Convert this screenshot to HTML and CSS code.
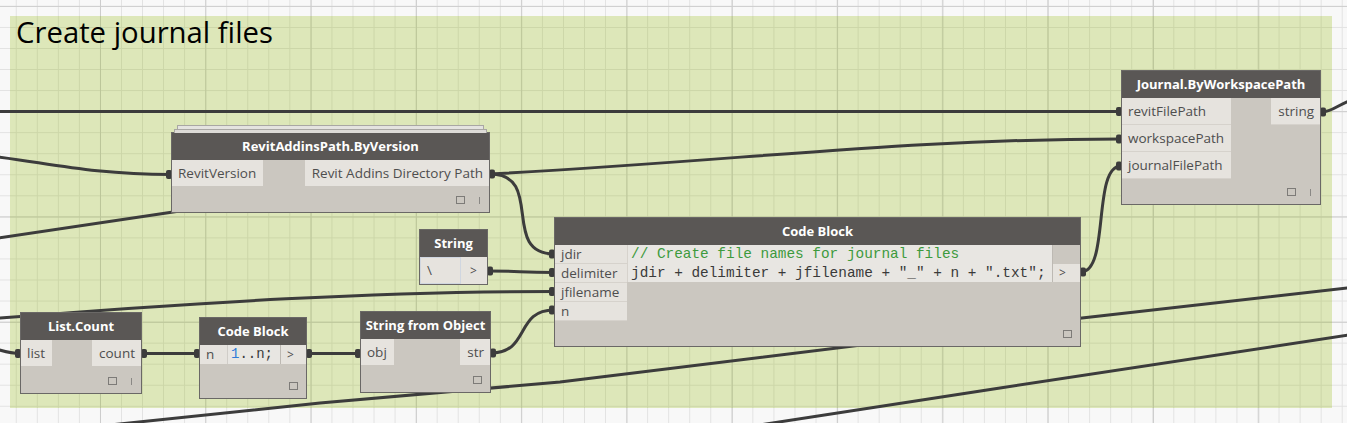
FILE: index.html
```html
<!DOCTYPE html>
<html>
<head>
<meta charset="utf-8">
<link rel="stylesheet" href="styles.css">
</head>
<body>
<div class="canvas">
  <div class="group"><div class="group-title">Create journal files</div></div>

  <svg class="wires" width="1347" height="423" viewBox="0 0 1347 423">
    <g class="wire">
      <path d="M -5 111.5 L 1121 111.5"/>
      <path d="M -80 152 C 20 152, 60 174.5, 171 174.5"/>
      <path d="M -5 238.5 L 200 208"/>
      <path d="M -5 318.5 C 200 302, 380 291.5, 554 291.5"/>
      <path d="M -40 340 C -10 344, 0 353.5, 20 353.5"/>
      <path d="M 142 353.5 L 199 353.5"/>
      <path d="M 307 353.5 L 360 353.5"/>
      <path d="M 491 353 C 530 353, 515 310, 554 310"/>
      <path d="M 488 271 C 520 271, 520 272.5, 554 272.5"/>
      <path d="M 490 174 C 545 174, 500 254, 554 254"/>
      <path d="M 490 174 C 750 160, 900 139, 1121 139"/>
      <path d="M 1081 272 C 1110 272, 1092 166, 1121 166"/>
      <path d="M 1321 112 C 1333 112, 1338 104, 1352 100"/>
      <path d="M 110 425 L 320 403 L 560 382 L 1082 318 L 1352 287.5"/>
      <path d="M 740 428 L 1000 388 L 1352 334.5"/>
    </g>
    <g class="pins">
      <rect x="166" y="170" width="6" height="9" rx="2"/>
      <rect x="1116" y="107" width="6" height="9" rx="2"/>
      <rect x="1116" y="134.5" width="6" height="9" rx="2"/>
      <rect x="1116" y="161.5" width="6" height="9" rx="2"/>
      <rect x="549" y="249.5" width="6" height="9" rx="2"/>
      <rect x="549" y="268" width="6" height="9" rx="2"/>
      <rect x="549" y="287" width="6" height="9" rx="2"/>
      <rect x="549" y="305.5" width="6" height="9" rx="2"/>
      <rect x="15" y="349" width="6" height="9" rx="2"/>
      <rect x="194" y="349" width="6" height="9" rx="2"/>
      <rect x="355" y="349" width="6" height="9" rx="2"/>
      <rect x="489" y="169.5" width="6" height="9" rx="2"/>
      <rect x="1320" y="107.5" width="6" height="9" rx="2"/>
      <rect x="487" y="266.5" width="6" height="9" rx="2"/>
      <rect x="1080" y="267.5" width="6" height="9" rx="2"/>
      <rect x="141" y="349" width="6" height="9" rx="2"/>
      <rect x="306" y="349" width="6" height="9" rx="2"/>
      <rect x="490" y="348.5" width="6" height="9" rx="2"/>
    </g>
  </svg>

  <div class="node n-revit">
    <div class="stack"></div>
    <div class="head">RevitAddinsPath.ByVersion</div>
    <div class="ports">
      <div class="col"><div class="port in">RevitVersion</div></div>
      <div class="col"><div class="port out">Revit Addins Directory Path</div></div>
    </div>
    <div class="foot"><span class="sq"></span><span class="lace"></span></div>
  </div>

  <div class="node n-journal">
    <div class="head">Journal.ByWorkspacePath</div>
    <div class="ports">
      <div class="col">
        <div class="port in tall">revitFilePath</div>
        <div class="port in tall">workspacePath</div>
        <div class="port in tall">journalFilePath</div>
      </div>
      <div class="col"><div class="port out tall">string</div></div>
    </div>
    <div class="foot"><span class="sq"></span><span class="lace"></span></div>
  </div>

  <div class="node n-string">
    <div class="head">String</div>
    <div class="srow">
      <div class="sval">\</div>
      <div class="sout">&gt;</div>
    </div>
  </div>

  <div class="node n-code">
    <div class="head">Code Block</div>
    <div class="cb">
      <div class="cb-in">
        <div class="cport">jdir</div>
        <div class="cport">delimiter</div>
        <div class="cport">jfilename</div>
        <div class="cport">n</div>
      </div>
      <div class="cb-code">
        <div class="cline comment">// Create file names for journal files</div>
        <div class="cline">jdir + delimiter + jfilename + "_" + n + ".txt";</div>
      </div>
      <div class="cb-out">
        <div class="cout blank"></div>
        <div class="cout">&gt;</div>
      </div>
    </div>
    <div class="foot"><span class="sq"></span></div>
  </div>

  <div class="node n-count">
    <div class="head">List.Count</div>
    <div class="ports">
      <div class="col"><div class="port in">list</div></div>
      <div class="col"><div class="port out">count</div></div>
    </div>
    <div class="foot"><span class="sq"></span><span class="lace"></span></div>
  </div>

  <div class="node n-cb2">
    <div class="head">Code Block</div>
    <div class="mini">
      <div class="mport">n</div>
      <div class="mcode"><span class="num">1</span>..n;</div>
      <div class="mout">&gt;</div>
    </div>
    <div class="foot"><span class="sq"></span></div>
  </div>

  <div class="node n-sfo">
    <div class="head">String from Object</div>
    <div class="ports">
      <div class="col"><div class="port in">obj</div></div>
      <div class="col"><div class="port out">str</div></div>
    </div>
    <div class="foot"><span class="sq"></span></div>
  </div>
</div>
</body>
</html>
```

FILE: styles.css
```css
body {
  margin: 0;
}

.canvas {
  position: relative;
  width: 1347px;
  height: 423px;
  overflow: hidden;
  background-color: #f8f8f8;
  background-image:
    linear-gradient(to right, #cdcdcd 1px, transparent 1px),
    linear-gradient(to bottom, #cdcdcd 1px, transparent 1px),
    linear-gradient(to right, #e2e2e2 1px, transparent 1px),
    linear-gradient(to bottom, #e2e2e2 1px, transparent 1px);
  background-size: 105.3px 105.3px, 105.3px 105.3px, 21.06px 21.06px, 21.06px 21.06px;
  background-position: 100px 0, 0 5.9px, 15.76px 0, 0 5.9px;
  font-family: "Open Sans", "Noto Sans", sans-serif;
}

.group {
  position: absolute;
  left: 10px;
  top: 16px;
  width: 1322px;
  height: 392px;
  background-color: #dde7b9;
  background-image:
    linear-gradient(to right, #bcc69a 1px, transparent 1px),
    linear-gradient(to bottom, #bcc69a 1px, transparent 1px),
    linear-gradient(to right, #ccd6a8 1px, transparent 1px),
    linear-gradient(to bottom, #ccd6a8 1px, transparent 1px);
  background-size: 105.3px 105.3px, 105.3px 105.3px, 21.06px 21.06px, 21.06px 21.06px;
  background-position: 90px 0, 0 95.2px, 5.76px 0, 0 10.96px;
}

.group-title {
  padding: 2px 0 0 6px;
  font-size: 29.3px;
  line-height: 29px;
  color: #000;
}

.wires {
  position: absolute;
  left: 0;
  top: 0;
}

.wire path {
  fill: none;
  stroke: #3c3c3c;
  stroke-width: 3;
}

.pins rect {
  fill: #3c3c3c;
}

/* nodes */
.node {
  position: absolute;
  box-sizing: border-box;
  display: flex;
  flex-direction: column;
  background: #cbc7c0;
  border: 1px solid #6a6866;
  color: #4e4e4e;
  font-size: 13.5px;
}

.head {
  flex: none;
  height: 27px;
  background: #5a5755;
  color: #fff;
  font-weight: 700;
  font-size: 13px;
  line-height: 27px;
  text-align: center;
  white-space: nowrap;
}

.ports {
  display: flex;
  justify-content: space-between;
  align-items: flex-start;
}

.col {
  display: flex;
  flex-direction: column;
}

.port {
  height: 26px;
  line-height: 26px;
  background: #e6e3de;
  white-space: nowrap;
}

.port.tall {
  height: 26px;
  line-height: 26px;
  border-bottom: 1px solid #d6d2cc;
}

.port.in {
  padding: 0 7px 0 6px;
}

.port.out {
  padding: 0 6px 0 7px;
  text-align: right;
}

.foot {
  flex: 1;
  display: flex;
  justify-content: flex-end;
  align-items: flex-end;
  padding: 0 8px 8px 0;
}

.sq {
  width: 9px;
  height: 8px;
  box-sizing: border-box;
  border: 1px solid #7d7b78;
}

.lace {
  margin-left: 14px;
  margin-right: 1px;
  width: 1px;
  height: 7px;
  background: #8a8885;
}

/* stacked node plates */
.stack {
  position: absolute;
  left: 5px;
  right: 5px;
  top: -8px;
  height: 7px;
  box-sizing: border-box;
  border: 1px solid #a9a7a4;
  border-bottom: none;
  background: #e4e3e0;
}

.stack::after {
  content: "";
  position: absolute;
  left: -4px;
  right: -4px;
  top: 3px;
  height: 3px;
  border: 1px solid #a9a7a4;
  border-bottom: none;
  background: #dddbd7;
}

/* placement on the canvas */
.n-revit { left: 171px; top: 132px; width: 319px; height: 81px; }
.n-journal { left: 1121px; top: 70px; width: 200px; height: 135px; }
.n-string { left: 419px; top: 229px; width: 69px; height: 56px; }
.n-code { left: 554px; top: 217px; width: 527px; height: 130px; }
.n-count { left: 20px; top: 312px; width: 122px; height: 82px; }
.n-cb2 { left: 199px; top: 317px; width: 108px; height: 82px; }
.n-sfo { left: 360px; top: 311px; width: 131px; height: 82px; }

.n-string .head { height: 27px; line-height: 27px; }

/* string input */
.srow {
  display: flex;
  height: 27px;
}

.sval {
  width: 41px;
  box-sizing: border-box;
  padding-left: 6px;
  line-height: 25px;
  background: #e6e3de;
  border: 1px solid #d0d6e0;
}

.sout {
  flex: 1;
  padding-left: 9px;
  line-height: 27px;
  background: #e6e3de;
  font-size: 12px;
}

/* code block */
.cb {
  display: flex;
  align-items: flex-start;
}

.cb-in {
  width: 72px;
  display: flex;
  flex-direction: column;
}

.cport {
  height: 18px;
  line-height: 18px;
  padding-left: 6px;
  background: #e6e3de;
  border-bottom: 1px solid #d6d2cc;
}

.cb-code {
  flex: 1;
  background: #e8e6e2;
  border-left: 1px solid #d6d2cc;
  border-right: 1px solid #bdb9b3;
  padding-left: 3px;
  font-family: "Liberation Mono", monospace;
  font-size: 14.4px;
  color: #3a3a3a;
}

.cline {
  height: 18.5px;
  line-height: 19px;
  white-space: pre;
}

.comment {
  color: #3d9a3d;
}

.cb-out {
  width: 27px;
  display: flex;
  flex-direction: column;
}

.cout {
  height: 18.5px;
  line-height: 18.5px;
  padding-left: 6px;
  background: #e6e3de;
  font-size: 12px;
}

.cout.blank {
  background: transparent;
}

/* small code block */
.mini {
  display: flex;
  height: 19px;
}

.mport {
  width: 27px;
  padding-left: 6px;
  box-sizing: border-box;
  line-height: 19px;
  background: #e6e3de;
}

.mcode {
  width: 54px;
  box-sizing: border-box;
  padding-left: 3px;
  line-height: 19px;
  background: #e8e6e2;
  border-left: 1px solid #d0cdc8;
  border-right: 1px solid #bdb9b3;
  font-family: "Liberation Mono", monospace;
  font-size: 14px;
  color: #3a3a3a;
}

.num {
  color: #2f7bd8;
}

.mout {
  flex: 1;
  padding-left: 6px;
  line-height: 19px;
  background: #e6e3de;
  font-size: 12px;
}
```
